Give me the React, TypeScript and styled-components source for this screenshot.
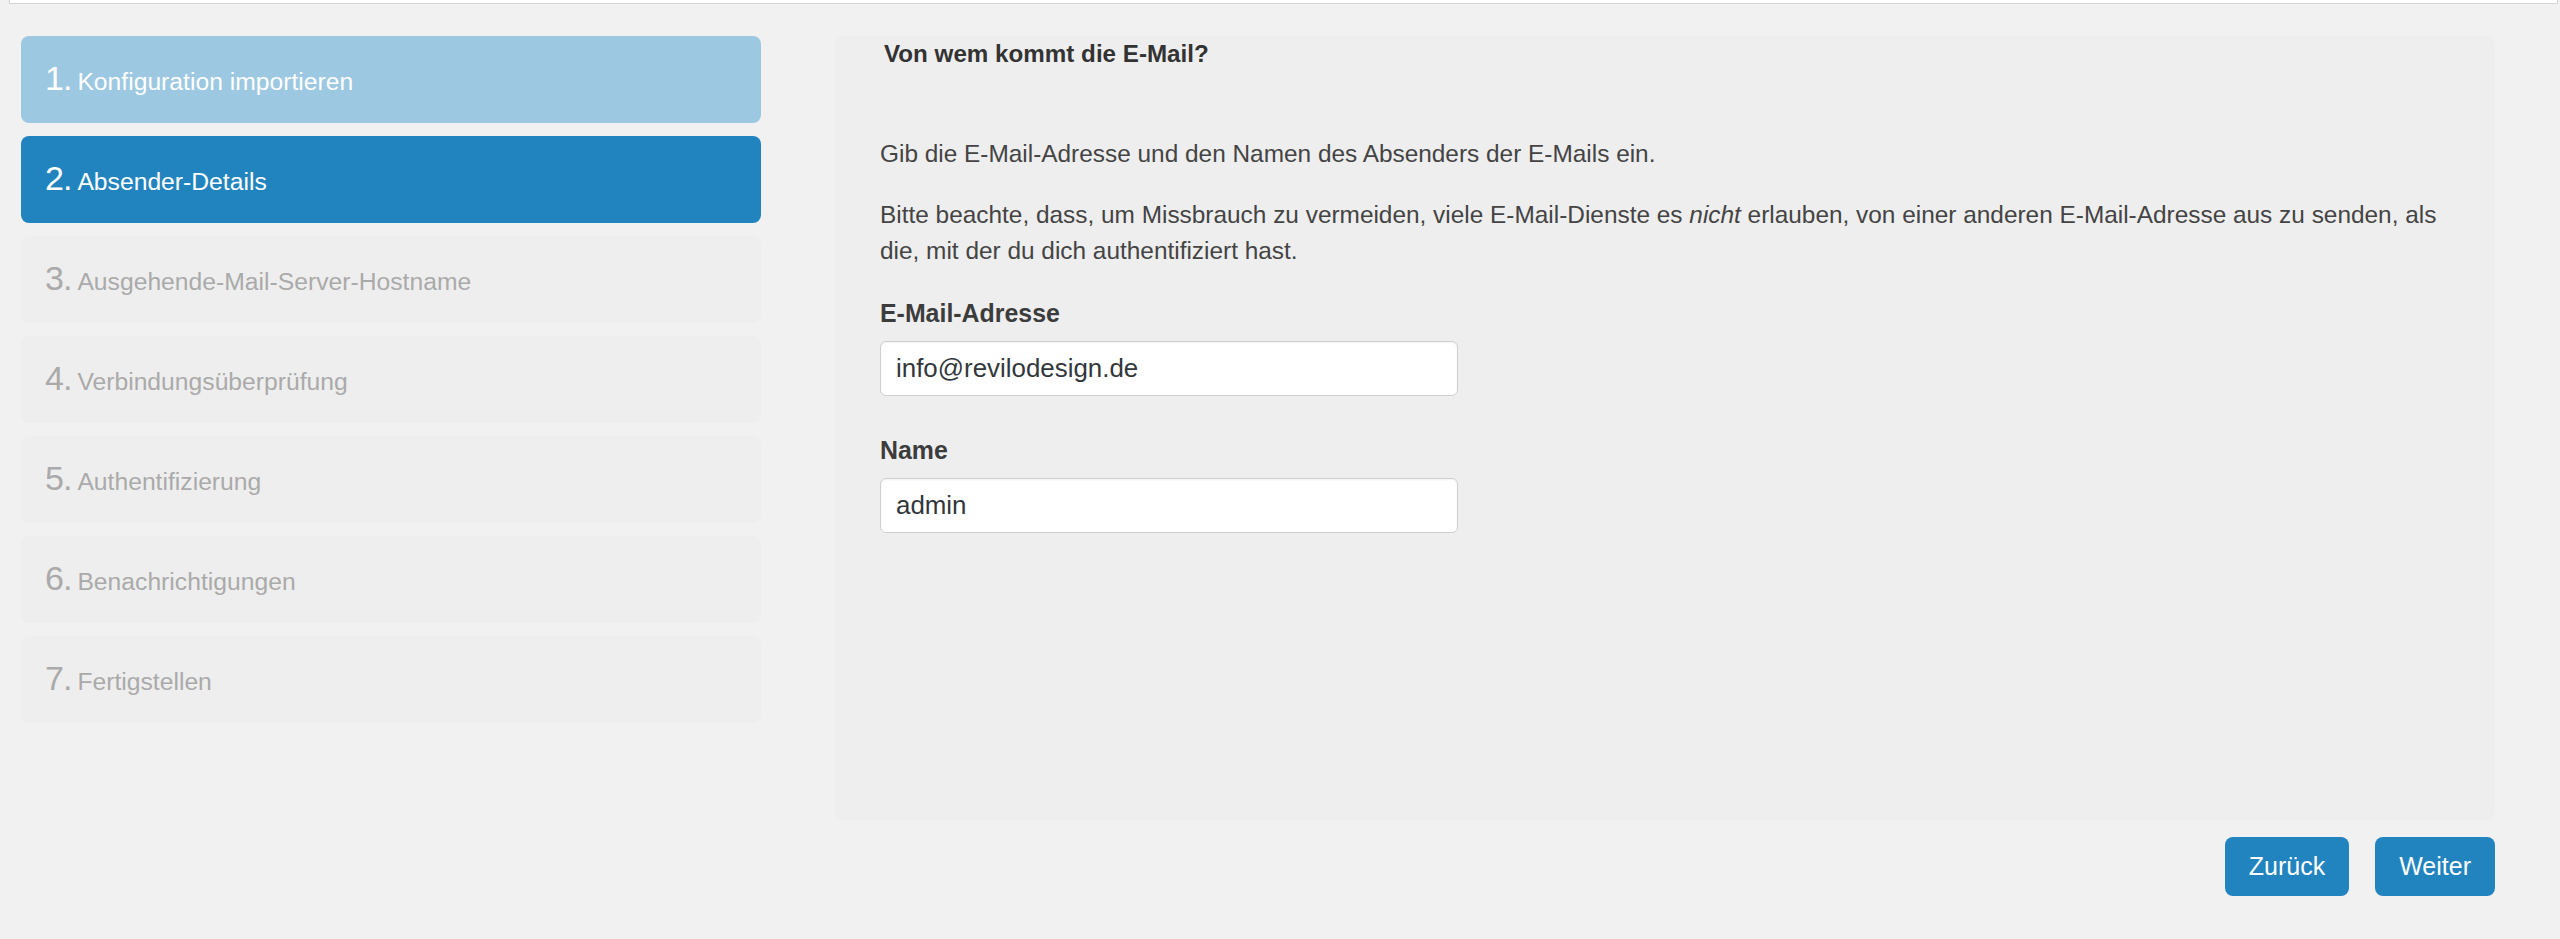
import styled, { createGlobalStyle } from 'styled-components'

type StepState = 'done' | 'current' | 'disabled'

interface StepItem {
  label: string
  state: StepState
}

const steps: StepItem[] = [
  { label: 'Konfiguration importieren', state: 'done' },
  { label: 'Absender-Details', state: 'current' },
  { label: 'Ausgehende-Mail-Server-Hostname', state: 'disabled' },
  { label: 'Verbindungsüberprüfung', state: 'disabled' },
  { label: 'Authentifizierung', state: 'disabled' },
  { label: 'Benachrichtigungen', state: 'disabled' },
  { label: 'Fertigstellen', state: 'disabled' },
]

const stepBg: Record<StepState, string> = {
  done: '#9dc8e2',
  current: '#2184be',
  disabled: '#eeeeee',
}

const stepColor: Record<StepState, string> = {
  done: '#ffffff',
  current: '#ffffff',
  disabled: '#aaaaaa',
}

export default function App() {
  return (
    <>
      <GlobalStyle />
      <TopBar />
      <Wizard>
        {/* ── Steps ── */}
        <Steps>
          {steps.map((s, i) => (
            <Step key={i} $state={s.state}>
              <Num>{i + 1}.</Num>{s.label}
            </Step>
          ))}
        </Steps>

        {/* ── Content ── */}
        <Content>
          <Title>Von wem kommt die E-Mail?</Title>
          <Intro>Gib die E-Mail-Adresse und den Namen des Absenders der E-Mails ein.</Intro>
          <Note>
            {'Bitte beachte, dass, um Missbrauch zu vermeiden, viele E-Mail-Dienste es '}
            <em>nicht</em>
            {' erlauben, von einer anderen E-Mail-Adresse aus zu senden, als '}
            {'die, mit der du dich authentifiziert hast.'}
          </Note>

          <Field $first>
            <label>E-Mail-Adresse</label>
            <input defaultValue="info@revilodesign.de" />
          </Field>
          <Field>
            <label>Name</label>
            <input defaultValue="admin" />
          </Field>
        </Content>

        <Actions>
          <ActionBtn type="button">Zurück</ActionBtn>
          <ActionBtn type="button">Weiter</ActionBtn>
        </Actions>
      </Wizard>
    </>
  )
}

const GlobalStyle = createGlobalStyle`
  html, body { margin: 0; padding: 0; background: #f1f1f1; }
  body {
    font-family: "Liberation Sans", Arial, sans-serif;
    color: #444;
    -webkit-font-smoothing: antialiased;
  }
  #root { min-height: 939px; }
`

const TopBar = styled.div`
  height: 3px; margin: 0 2px 0 9px; background: #fff;
  border: 1px solid #d4d4d4; border-top: none;
`

const Wizard = styled.div`
  display: grid; grid-template-columns: 740px 1660px; column-gap: 74px;
  padding: 32px 0 0 21px;
`

const Steps = styled.ol`
  list-style: none; margin: 0; padding: 0;
  display: flex; flex-direction: column; gap: 13px;
`

const Step = styled.li<{ $state: StepState }>`
  height: 87px; box-sizing: border-box; padding: 22px 24px 0;
  border-radius: 8px; white-space: nowrap;
  background: ${({ $state }) => stepBg[$state]};
  color: ${({ $state }) => stepColor[$state]};
  font-size: 24.7px; line-height: 40px;
`

const Num = styled.span`
  font-size: 34px; letter-spacing: -1px; margin-right: 6px;
`

const Content = styled.div`
  background: #eee; border-radius: 8px;
  height: 784px; box-sizing: border-box; padding: 0 45px;
`

const Title = styled.h3`
  margin: 0; padding-left: 4px;
  font-size: 24.2px; font-weight: 700; line-height: 36px; color: #333;
`

const Intro = styled.p`
  margin: 64px 0 0; font-size: 24.4px; line-height: 36px;
`

const Note = styled(Intro)`
  margin-top: 25px;
  em { font-style: italic; }
`

const Field = styled.div<{ $first?: boolean }>`
  margin-top: ${({ $first }) => ($first ? '26px' : '36px')};
  label {
    display: block; font-size: 24.9px; font-weight: 700;
    line-height: 36px; color: #3c3c3c;
  }
  input {
    display: block; margin-top: 10px;
    width: 578px; height: 55px; box-sizing: border-box;
    padding: 0 15px; border: 1px solid #cfcfcf; border-radius: 6px;
    background: #fff; color: #32373c;
    font-family: "Liberation Sans", Arial, sans-serif; font-size: 25.9px;
    box-shadow: inset 0 1px 2px rgba(0,0,0,0.05); outline: none;
  }
`

const Actions = styled.div`
  grid-column: 2; display: flex; justify-content: flex-end; gap: 26px;
  margin-top: 17px;
`

const ActionBtn = styled.button`
  height: 59px; padding: 0 24px; border: none; border-radius: 8px;
  background: #2184be; color: #fff; cursor: pointer;
  font-family: "Liberation Sans", Arial, sans-serif; font-size: 25px;
`
